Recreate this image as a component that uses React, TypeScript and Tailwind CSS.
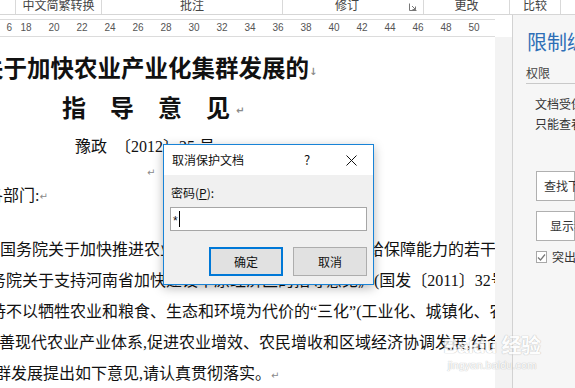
const RULER = [18, 20, 22, 24, 26, 28, 30, 32, 34, 36, 38, 40, 42, 44, 46, 48, 50];

const DOC_FONT = "font-['Liberation_Serif','Noto_Sans_CJK_SC',serif]";

function Mark({ ch = '↵' }: { ch?: string }) {
  return <span className="font-['DejaVu_Sans',sans-serif] text-[10px] text-[#8a8a8a] align-middle">{ch}</span>;
}

function Ribbon() {
  return (
    <div className="h-[15px] border-b border-[#d6d6d6] overflow-hidden bg-white">
      <div className="flex -mt-[5px] h-[19px] text-[12px] leading-[19px] text-[#444] font-['Noto_Sans_CJK_SC',sans-serif]">
        <div className="w-[16px] border-r border-[#d9d9d9]" />
        <div className="w-[86px] border-r border-[#d9d9d9] text-center">中文简繁转换</div>
        <div className="w-[181px] border-r border-[#d9d9d9] text-center">批注</div>
        <div className="w-[141px] border-r border-[#d9d9d9] flex">
          <div className="flex-1 text-center pl-[2px]">修订</div>
          <div className="w-[14px] flex items-end pb-[3px]">
            <svg width="8" height="8" viewBox="0 0 8 8" className="text-[#777]">
              <path d="M0.5 0.5V7.5H7.5" fill="none" stroke="currentColor" />
              <path d="M3 3L6.5 6.5M6.5 3.5V6.5H3.5" fill="none" stroke="currentColor" />
            </svg>
          </div>
        </div>
        <div className="w-[86px] border-r border-[#d9d9d9] text-center">更改</div>
        <div className="w-[51px] border-r border-[#d9d9d9] text-center">比较</div>
      </div>
    </div>
  );
}

function Ruler() {
  return (
    <div className="mt-[4px] w-[495px] h-[18px] border-t border-b border-[#dcdcdc] bg-white flex items-center overflow-hidden text-[10px] leading-[16px] text-[#555] font-['Liberation_Sans',sans-serif]">
      <div className="w-[12px] shrink-0 text-right">6</div>
      {RULER.map((n) => (
        <div key={n} className="w-[28px] shrink-0 text-center">{n}</div>
      ))}
    </div>
  );
}

function Page() {
  return (
    <div className={`w-[495px] h-[351px] bg-white overflow-hidden whitespace-nowrap text-[#111] ${DOC_FONT}`}>
      <div className="mt-[20px] h-[24px] leading-[24px] text-[23.5px] font-bold -ml-[20px]">
        关于加快农业产业化集群发展的<Mark ch="↓" />
      </div>
      <div className="mt-[16px] h-[24px] leading-[24px] text-[24px] font-bold pl-[62px]">
        指　导　意　见 <Mark />
      </div>
      <div className="mt-[18px] h-[16px] leading-[16px] text-[16px] pl-[75px]">
        豫政　〔2012〕25 号
      </div>
      <div className="mt-[9px] h-[16px] leading-[16px] pl-[147px]">
        <Mark />
      </div>
      <div className="mt-[8px] h-[16px] leading-[16px] text-[16px] -ml-[13px]">
        各部门:<Mark />
      </div>
      <div className="mt-[30px] text-[16px] leading-[31px]">
        <div className="h-[31px]">国务院关于加快推进农业科技创新持续增强农产品供给保障能力的若干意见》</div>
        <div className="h-[31px] -ml-[10px]">务院关于支持河南省加快建设中原经济区的指导意见》(国发〔2011〕32号)</div>
        <div className="h-[31px] -ml-[10px]">持不以牺牲农业和粮食、生态和环境为代价的“三化”(工业化、城镇化、农业现代化)</div>
        <div className="h-[31px] -ml-[1px]">善现代农业产业体系,促进农业增效、农民增收和区域经济协调发展,结合</div>
        <div className="h-[31px] -ml-[5px]">群发展提出如下意见,请认真贯彻落实。<Mark /></div>
      </div>
    </div>
  );
}

function Panel() {
  return (
    <div className="flex-1 h-[373px] border-l border-[#d2d2d2] bg-[#f6f6f6] overflow-hidden whitespace-nowrap font-['Noto_Sans_CJK_SC',sans-serif]">
      <div className="mt-[15px] pl-[14px] h-[24px] leading-[24px] text-[20px] text-[#2e6fb7]">限制编辑</div>
      <div className="mt-[11px] ml-[13px] h-[19px] leading-[16px] text-[12px] text-[#444] border-b border-[#c9c9c9]">权限</div>
      <div className="mt-[10px] pl-[22px] text-[12px] leading-[20px] text-[#333]">
        <div>文档受保护，以防误编辑。</div>
        <div>只能查看此区域。</div>
      </div>
      <div className="mt-[37px] ml-[23px] h-[30px] border border-[#b0b0b0] bg-white pl-[7px] leading-[28px] text-[12px] text-[#333]">
        查找下一个我可以编辑的区域
      </div>
      <div className="mt-[10px] ml-[23px] h-[30px] border border-[#b0b0b0] bg-white pl-[13px] leading-[28px] text-[12px] text-[#333]">
        显示我可以编辑的所有区域
      </div>
      <div className="mt-[7px] ml-[23px] flex items-center gap-[5px] text-[12px] text-[#333]">
        <div className="w-[12px] h-[12px] border border-[#a8a8a8] bg-white flex items-center justify-center">
          <svg width="9" height="9" viewBox="0 0 9 9">
            <path d="M1 4.5L3.5 7L8 1.5" fill="none" stroke="#777" strokeWidth="1.2" />
          </svg>
        </div>
        <span>突出显示可编辑的区域</span>
      </div>
    </div>
  );
}

function Dialog() {
  return (
    <div className="absolute left-[163px] top-[144px] w-[211px] h-[141px] border border-[#1883d7] bg-[#f0f0f0] shadow-[0_3px_10px_rgba(0,0,0,0.28)] font-['Noto_Sans_CJK_SC',sans-serif] text-[12px] text-[#111]">
      <div className="h-[30px] bg-white flex items-center pl-[8px]">
        <span className="flex-1">取消保护文档</span>
        <span className="w-[14px] text-center text-[13px] mr-[32px]">?</span>
        <svg width="11" height="11" viewBox="0 0 11 11" className="mr-[16px]">
          <path d="M0.5 0.5L10.5 10.5M10.5 0.5L0.5 10.5" stroke="#111" strokeWidth="1" />
        </svg>
      </div>
      <div className="px-[6px]">
        <div className="mt-[10px] pl-[1px] h-[16px] leading-[16px]">
          密码(<span className="underline">P</span>):
        </div>
        <div className="mt-[6px] h-[24px] border border-[#a6a6a6] bg-white flex items-center pl-[2px]">
          <span className="font-['Liberation_Sans',sans-serif] text-[12px] mt-[3px]">*</span>
          <span className="ml-[1px] w-px h-[16px] bg-black" />
        </div>
        <div className="mt-[16px] flex justify-end gap-[10px]">
          <button className="w-[74px] h-[29px] border-2 border-[#0078d7] bg-[#e1e1e1]">确定</button>
          <button className="w-[74px] h-[29px] border border-[#adadad] bg-[#e1e1e1]">取消</button>
        </div>
      </div>
    </div>
  );
}

function Watermark() {
  return (
    <div className="absolute left-[440px] top-[332px] w-[104px] text-center font-['Liberation_Sans',sans-serif] text-white [text-shadow:0_0_1px_#b5b5b5,0_0_1px_#b5b5b5] opacity-80">
      <div className="text-[20px] leading-[26px] font-bold tracking-tight">
        Baidu <span className="font-['Noto_Sans_CJK_SC',sans-serif]">经验</span>
      </div>
      <div className="text-[11px] leading-[12px]">jingyan.baidu.com</div>
    </div>
  );
}

export default function App() {
  return (
    <div className="relative w-[575px] h-[388px] overflow-hidden bg-white">
      <Ribbon />
      <div className="flex">
        <div className="w-[512px]">
          <Ruler />
          <div className="flex">
            <Page />
            <div className="flex-1 bg-[#f3f3f3]" />
          </div>
        </div>
        <Panel />
      </div>
      <Dialog />
      <Watermark />
    </div>
  );
}
